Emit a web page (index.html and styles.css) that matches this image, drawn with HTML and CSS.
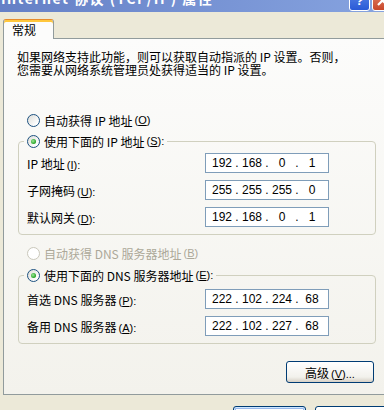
FILE: index.html
```html
<!DOCTYPE html>
<html lang="zh-CN">
  <head>
    <meta charset="UTF-8" />
    <title>Internet 协议 (TCP/IP) 属性</title>
    <link rel="stylesheet" href="styles.css">
  </head>
  <body>
    <div class="dialog">
      <div class="titlebar">
        <span class="title">Internet 协议 (TCP/IP) 属性</span>
        <span class="cbtn help">?</span>
        <span class="cbtn close">
          <svg width="21" height="21" viewBox="0 0 21 21"><path d="M6 6L15 15M15 6L6 15" stroke="#fff" stroke-width="2.2" /></svg>
        </span>
      </div>

      <div class="tabs">
        <div class="tab active">常规</div>
      </div>

      <div class="panel">
        <p class="intro">如果网络支持此功能，则可以获取自动指派的 IP 设置。否则，<br />您需要从网络系统管理员处获得适当的 IP 设置。</p>

        <label class="radio first"><span class="dot"></span>自动获得 IP 地址<span class="key">(<u>O</u>)</span></label>

        <fieldset class="group">
          <legend><label class="radio checked"><span class="dot"></span>使用下面的 IP 地址<span class="key">(<u>S</u>):</span></label></legend>
          <div class="field">
            <span class="field-label">IP 地址<span class="key">(<u>I</u>):</span></span>
            <div class="ipbox"><span>192</span><i>.</i><span>168</span><i>.</i><span>0</span><i>.</i><span>1</span></div>
          </div>
          <div class="field">
            <span class="field-label">子网掩码<span class="key">(<u>U</u>):</span></span>
            <div class="ipbox"><span>255</span><i>.</i><span>255</span><i>.</i><span>255</span><i>.</i><span>0</span></div>
          </div>
          <div class="field">
            <span class="field-label">默认网关<span class="key">(<u>D</u>):</span></span>
            <div class="ipbox"><span>192</span><i>.</i><span>168</span><i>.</i><span>0</span><i>.</i><span>1</span></div>
          </div>
        </fieldset>

        <label class="radio second disabled"><span class="dot"></span>自动获得 DNS 服务器地址<span class="key">(<u>B</u>)</span></label>

        <fieldset class="group dns">
          <legend><label class="radio checked"><span class="dot"></span>使用下面的 DNS 服务器地址<span class="key">(<u>E</u>):</span></label></legend>
          <div class="field">
            <span class="field-label">首选 DNS 服务器<span class="key">(<u>P</u>):</span></span>
            <div class="ipbox"><span>222</span><i>.</i><span>102</span><i>.</i><span>224</span><i>.</i><span>68</span></div>
          </div>
          <div class="field">
            <span class="field-label">备用 DNS 服务器<span class="key">(<u>A</u>):</span></span>
            <div class="ipbox"><span>222</span><i>.</i><span>102</span><i>.</i><span>227</span><i>.</i><span>68</span></div>
          </div>
        </fieldset>

        <div class="actions">
          <button class="btn advanced">高级<span class="key">(<u>V</u>)...</span></button>
        </div>
      </div>

      <div class="footer">
        <button class="btn default">确定</button>
        <button class="btn">取消</button>
      </div>
    </div>
  </body>
</html>
```

FILE: styles.css
```css
html,
body {
  margin: 0;
  overflow: hidden;
  background: #ece9d8;
}

body {
  font-family: "Noto Sans CJK SC", sans-serif;
  font-size: 12px;
  color: #000;
}

.dialog {
  width: 394px;
}

/* title bar, mostly cut off at the top */
.titlebar {
  height: 12px;
  display: flex;
  align-items: flex-end;
  overflow: hidden;
  padding-right: 1px;
  background: linear-gradient(90deg, #6580c6, #87a4e0);
}

.title {
  flex: 1;
  color: #fff;
  font-weight: bold;
  font-size: 14px;
  line-height: 14px;
  white-space: nowrap;
  padding-left: 1px;
  margin-bottom: 7px;
  letter-spacing: 1.5px;
}

.cbtn {
  width: 21px;
  height: 21px;
  box-sizing: border-box;
  border: 1px solid #fff;
  border-radius: 3px;
  margin-bottom: 1px;
  color: #fff;
  font: bold 13px "Liberation Sans", sans-serif;
  text-align: center;
  line-height: 19px;
}

.help {
  background: linear-gradient(#5a86e6, #2a5ad7);
  margin-right: 2px;
}

.close {
  background: linear-gradient(#e4866c, #c8472a);
}

.close svg {
  display: block;
  margin: -1px;
}

/* tabs */
.tabs {
  display: flex;
  padding: 7px 0 0 3px;
}

.tab {
  width: 51px;
  height: 20px;
  box-sizing: border-box;
  border: 1px solid #919b9c;
  border-top-color: #e68b2c;
  border-bottom: none;
  border-radius: 3px 3px 0 0;
  box-shadow: inset 0 2px 0 #ffc73c;
  background: #fcfcfb;
  margin-bottom: -1px;
  padding: 2px 0 0 8px;
  line-height: 16px;
  position: relative;
  z-index: 1;
}

.panel {
  margin: 0 3px;
  border: 1px solid #919b9c;
  background: linear-gradient(#fcfcfb, #f3f2ec);
  padding: 11px 0 11px 13px;
}

.intro {
  margin: 0;
  line-height: 13px;
}

/* mnemonic keys like (O) */
.key {
  font-family: "Liberation Sans", sans-serif;
  font-size: 11px;
  margin-left: 2px;
}

/* radio buttons */
.radio {
  display: flex;
  align-items: center;
  gap: 4px;
  height: 13px;
  line-height: 13px;
  white-space: nowrap;
}

.radio .key {
  margin-left: -2px;
}

.radio.first {
  margin: 38px 0 0 10px;
}

.radio.second {
  margin: 12px 0 0 10px;
}

.dot {
  width: 13px;
  height: 13px;
  box-sizing: border-box;
  border: 1px solid #1c5180;
  border-radius: 50%;
  background: linear-gradient(135deg, #dcdcd7, #fff 80%);
  position: relative;
  flex: none;
}

.checked .dot::after {
  content: "";
  position: absolute;
  left: 3px;
  top: 3px;
  width: 5px;
  height: 5px;
  border-radius: 50%;
  background: radial-gradient(circle at 40% 40%, #9ee89a, #21a121 70%);
}

.disabled {
  color: #aca899;
}

.disabled .dot {
  border-color: #cac8bb;
  background: #fff;
}

/* group boxes */
.group {
  margin: 8px 0 0 1px;
  width: 358px;
  box-sizing: border-box;
  border: 1px solid #d0d0bf;
  border-radius: 4px;
  padding: 5px 0 7px 5px;
}

.group.dns {
  margin-top: 9px;
  padding-top: 7px;
}

.group legend {
  padding: 0 3px;
  height: 13px;
}

.field {
  display: flex;
  align-items: center;
  height: 20px;
  padding-left: 3px;
}

.field + .field {
  margin-top: 7px;
}

.field-label {
  width: 178px;
  white-space: nowrap;
}

.ipbox {
  width: 124px;
  height: 20px;
  box-sizing: border-box;
  border: 1px solid #7f9db9;
  background: #fff;
  display: flex;
  align-items: center;
  padding-left: 4px;
  font-family: "Liberation Sans", sans-serif;
  font-size: 12px;
}

.ipbox span {
  width: 24px;
  text-align: center;
}

.ipbox i {
  width: 6px;
  font-style: normal;
  text-align: center;
}

/* buttons */
.btn {
  height: 22px;
  box-sizing: border-box;
  border: 1px solid #003c74;
  border-radius: 3px;
  background: linear-gradient(#fff, #f2f1ec 75%, #d6d0c5);
  font-family: "Noto Sans CJK SC", sans-serif;
  font-size: 12px;
  padding: 0;
  color: #000;
}

.actions {
  display: flex;
  justify-content: flex-end;
  width: 358px;
  margin: 17px 0 0 1px;
  padding-right: 2px;
  box-sizing: border-box;
}

.advanced {
  width: 88px;
}

.footer {
  display: flex;
  justify-content: flex-end;
  gap: 9px;
  padding: 11px 6px 0 0;
}

.footer .btn {
  width: 73px;
  height: 23px;
}

.footer .default {
  box-shadow: inset 0 0 0 1px #cee7ff, inset 0 0 0 2px #98b8ea;
}
```
